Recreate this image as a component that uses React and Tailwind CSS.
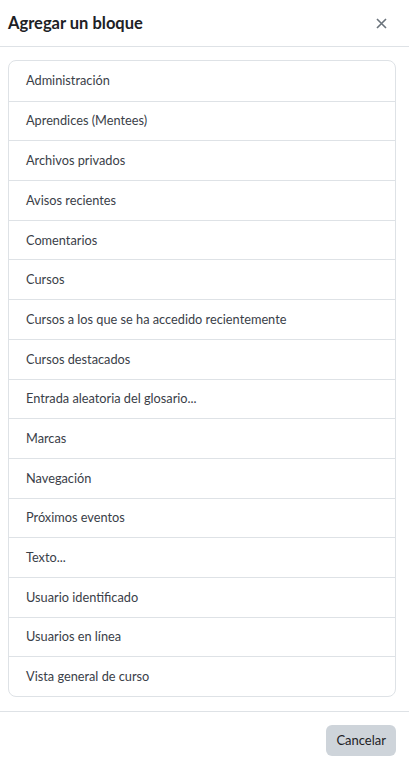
const blocks = [
  'Administración',
  'Aprendices (Mentees)',
  'Archivos privados',
  'Avisos recientes',
  'Comentarios',
  'Cursos',
  'Cursos a los que se ha accedido recientemente',
  'Cursos destacados',
  'Entrada aleatoria del glosario...',
  'Marcas',
  'Navegación',
  'Próximos eventos',
  'Texto...',
  'Usuario identificado',
  'Usuarios en línea',
  'Vista general de curso',
];

export default function App() {
  return (
    <div className="flex h-[768px] w-[409px] flex-col bg-white font-['Lato',sans-serif] text-[#1d2125]">
      <div className="flex h-[47px] items-center justify-between border-b border-[#dee2e6] px-2">
        <h5 className="text-[16.5px] font-bold">Agregar un bloque</h5>
        <button className="mr-[14px] text-[#6a737b]">
          <svg width="11" height="11" viewBox="0 0 11 11">
            <path d="M1 1 L10 10 M10 1 L1 10" stroke="currentColor" strokeWidth="1.6" />
          </svg>
        </button>
      </div>
      <div className="px-2 pt-[13px] pb-[14px]">
        <ul className="mr-[5px] overflow-hidden rounded-lg border border-[#dee2e6]">
          {blocks.map((b, i) => (
            <li
              key={b}
              className={`flex h-[39.7px] items-center px-[17px] text-[12.75px] text-[#3a4048] ${i > 0 ? 'border-t border-[#dee2e6]' : ''}`}
            >
              {b}
            </li>
          ))}
        </ul>
      </div>
      <div className="flex justify-end border-t border-[#dee2e6] px-[13px] pt-[13px]">
        <button className="h-[31px] rounded-md bg-[#ced4da] px-[10px] text-[13px] text-[#1d2125]">Cancelar</button>
      </div>
    </div>
  );
}
